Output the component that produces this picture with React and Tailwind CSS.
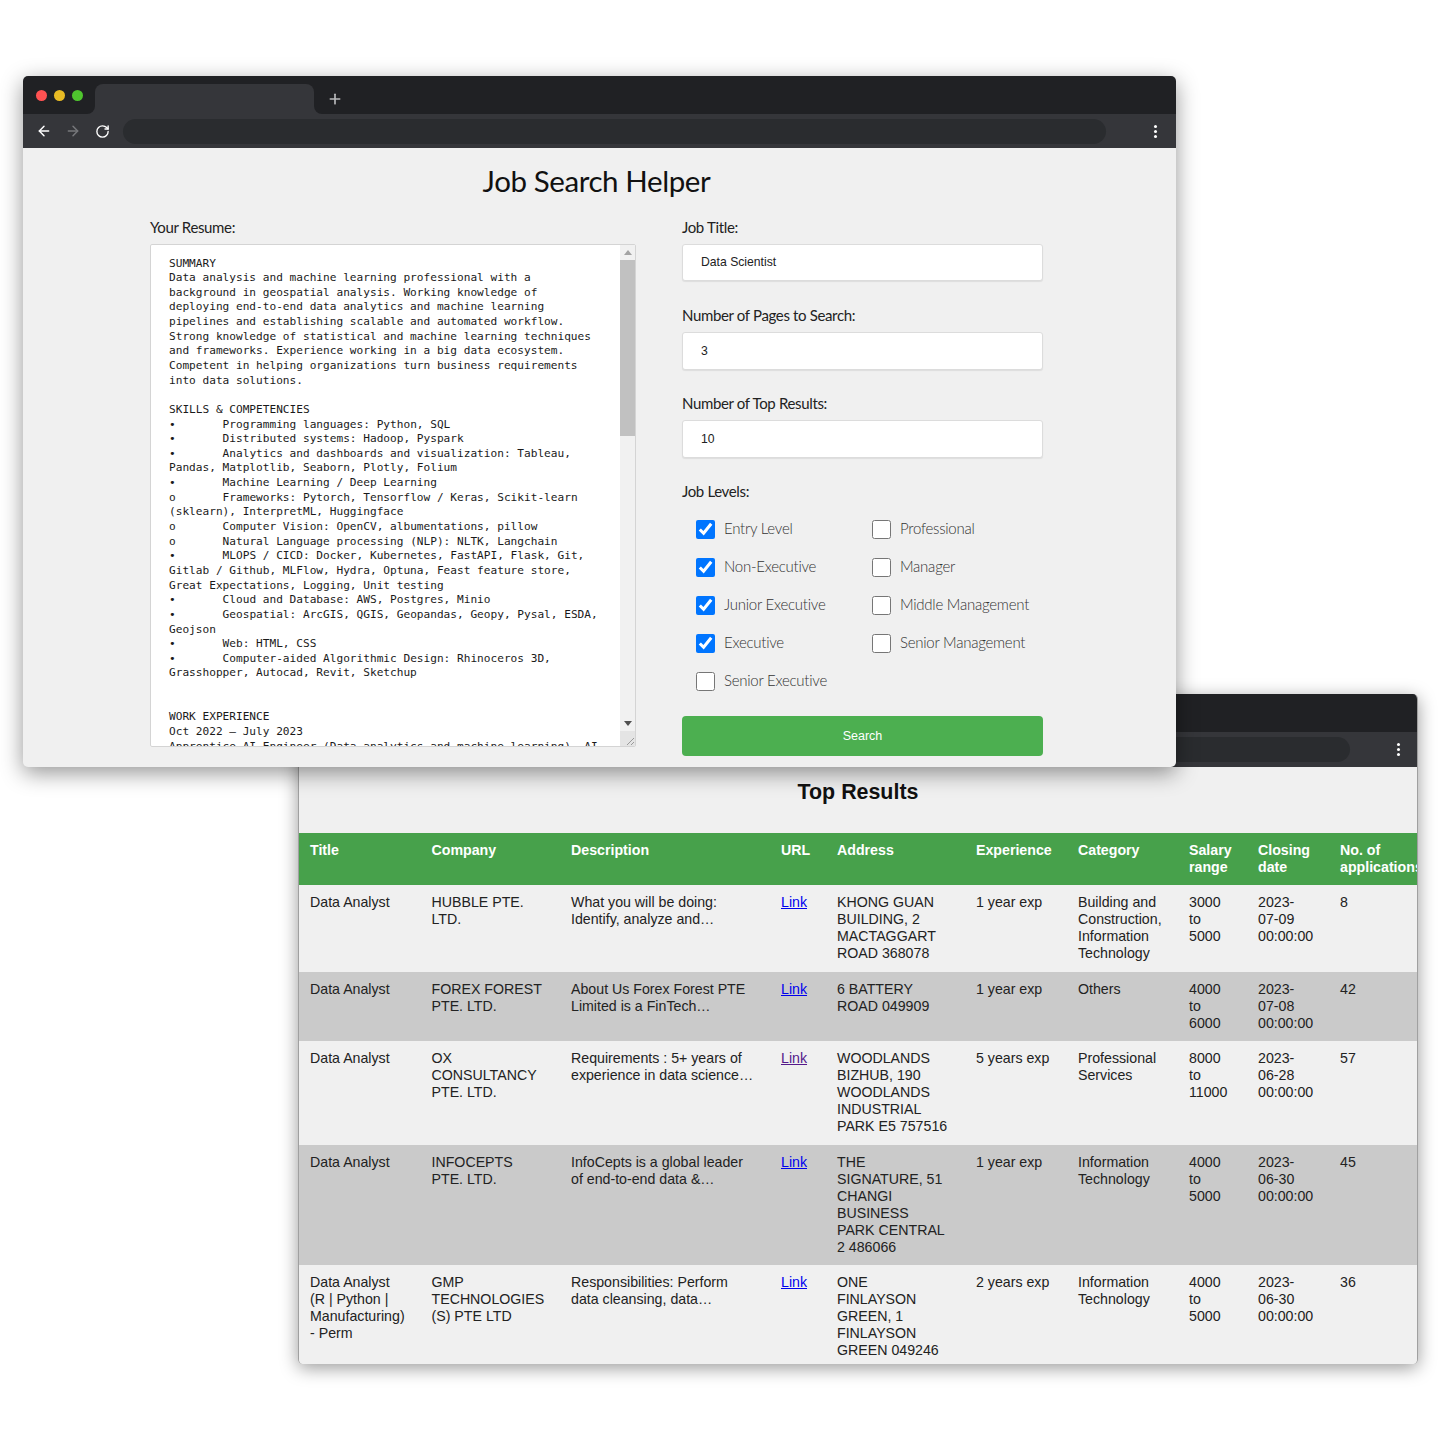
import React from "react";
import { ArrowLeft, ArrowRight, Plus, RotateCw } from "lucide-react";

const RESUME = `SUMMARY
Data analysis and machine learning professional with a
background in geospatial analysis. Working knowledge of
deploying end-to-end data analytics and machine learning
pipelines and establishing scalable and automated workflow.
Strong knowledge of statistical and machine learning techniques
and frameworks. Experience working in a big data ecosystem.
Competent in helping organizations turn business requirements
into data solutions.

SKILLS & COMPETENCIES
•\tProgramming languages: Python, SQL
•\tDistributed systems: Hadoop, Pyspark
•\tAnalytics and dashboards and visualization: Tableau,
Pandas, Matplotlib, Seaborn, Plotly, Folium
•\tMachine Learning / Deep Learning
o\tFrameworks: Pytorch, Tensorflow / Keras, Scikit-learn
(sklearn), InterpretML, Huggingface
o\tComputer Vision: OpenCV, albumentations, pillow
o\tNatural Language processing (NLP): NLTK, Langchain
•\tMLOPS / CICD: Docker, Kubernetes, FastAPI, Flask, Git,
Gitlab / Github, MLFlow, Hydra, Optuna, Feast feature store,
Great Expectations, Logging, Unit testing
•\tCloud and Database: AWS, Postgres, Minio
•\tGeospatial: ArcGIS, QGIS, Geopandas, Geopy, Pysal, ESDA,
Geojson
•\tWeb: HTML, CSS
•\tComputer-aided Algorithmic Design: Rhinoceros 3D,
Grasshopper, Autocad, Revit, Sketchup


WORK EXPERIENCE
Oct 2022 – July 2023
Apprentice AI Engineer (Data analytics and machine learning), AI`;

const LEVELS = [
  ["Entry Level", true],
  ["Professional", false],
  ["Non-Executive", true],
  ["Manager", false],
  ["Junior Executive", true],
  ["Middle Management", false],
  ["Executive", true],
  ["Senior Management", false],
  ["Senior Executive", false],
];

const COLUMNS = [
  ["Title", 121.5],
  ["Company", 139.5],
  ["Description", 210],
  ["URL", 56],
  ["Address", 139],
  ["Experience", 102],
  ["Category", 111],
  ["Salary range", 69],
  ["Closing date", 82],
  ["No. of applications", 100],
];

const ROWS = [
  {
    height: "h-[87px]",
    title: "Data Analyst",
    company: "HUBBLE PTE. LTD.",
    desc: "What you will be doing: Identify, analyze and…",
    address: "KHONG GUAN BUILDING, 2 MACTAGGART ROAD 368078",
    exp: "1 year exp",
    category: "Building and Construction, Information Technology",
    salary: "3000 to 5000",
    closing: "2023-\n07-09\n00:00:00",
    apps: "8",
  },
  {
    height: "h-[69px]",
    title: "Data Analyst",
    company: "FOREX FOREST PTE. LTD.",
    desc: "About Us Forex Forest PTE Limited is a FinTech…",
    address: "6 BATTERY ROAD 049909",
    exp: "1 year exp",
    category: "Others",
    salary: "4000 to 6000",
    closing: "2023-\n07-08\n00:00:00",
    apps: "42",
  },
  {
    height: "h-[104px]",
    title: "Data Analyst",
    company: "OX CONSULTANCY PTE. LTD.",
    desc: "Requirements : 5+ years of experience in data science…",
    address: "WOODLANDS BIZHUB, 190 WOODLANDS INDUSTRIAL PARK E5 757516",
    exp: "5 years exp",
    category: "Professional Services",
    salary: "8000 to 11000",
    closing: "2023-\n06-28\n00:00:00",
    apps: "57",
    visited: true,
  },
  {
    height: "h-[120px]",
    title: "Data Analyst",
    company: "INFOCEPTS PTE. LTD.",
    desc: "InfoCepts is a global leader of end-to-end data &…",
    address: "THE SIGNATURE, 51 CHANGI BUSINESS PARK CENTRAL 2 486066",
    exp: "1 year exp",
    category: "Information Technology",
    salary: "4000 to 5000",
    closing: "2023-\n06-30\n00:00:00",
    apps: "45",
  },
  {
    height: "h-[99px]",
    title: "Data Analyst (R | Python | Manufacturing) - Perm",
    company: "GMP TECHNOLOGIES (S) PTE LTD",
    desc: "Responsibilities: Perform data cleansing, data…",
    address: "ONE FINLAYSON GREEN, 1 FINLAYSON GREEN 049246",
    exp: "2 years exp",
    category: "Information Technology",
    salary: "4000 to 5000",
    closing: "2023-\n06-30\n00:00:00",
    apps: "36",
  },
];

const labelCls = "block text-[15px] leading-[19px] tracking-[-0.35px] text-[#222]";
const cellCls = "px-[11px] py-[9px] align-top";

function BrowserBar({ menuRight, pillRight, toolbarCls }) {
  return (
    <div className="shrink-0">
      {/* Tab strip */}
      <div className="relative flex h-[38px] items-end bg-[#202124] pl-[72px]">
        <div className="absolute left-[13px] top-[14px] flex gap-[7px]">
          <span className="h-[11px] w-[11px] rounded-full bg-[#ff5252]" />
          <span className="h-[11px] w-[11px] rounded-full bg-[#e8bb24]" />
          <span className="h-[11px] w-[11px] rounded-full bg-[#4fc52e]" />
        </div>
        <div className="relative h-[30px] w-[219px] rounded-t-lg bg-[#35363a]">
          <div className="absolute bottom-0 left-[-8px] h-2 w-2 bg-[#35363a]">
            <div className="h-2 w-2 rounded-br-lg bg-[#202124]" />
          </div>
          <div className="absolute bottom-0 right-[-8px] h-2 w-2 bg-[#35363a]">
            <div className="h-2 w-2 rounded-bl-lg bg-[#202124]" />
          </div>
        </div>
        <Plus size={16} strokeWidth={2.5} className="mb-[7px] ml-[13px] text-[#b9babc]" />
      </div>

      {/* Toolbar */}
      <div className={`relative flex items-center bg-[#35363a] pl-[13px] ${toolbarCls}`} style={{ paddingRight: pillRight }}>
        <ArrowLeft size={16} strokeWidth={2.2} className="text-white" />
        <ArrowRight size={16} strokeWidth={2.2} className="ml-[13px] text-[#77787b]" />
        <RotateCw size={15} strokeWidth={2.2} className="ml-[14px] text-white" />
        <div className="ml-[13px] h-[25px] flex-1 rounded-full bg-[#2a2c2f]" />
        <div className="absolute top-[11px] flex flex-col gap-[2px]" style={{ right: menuRight }}>
          <span className="h-[3px] w-[3px] rounded-full bg-white" />
          <span className="h-[3px] w-[3px] rounded-full bg-white" />
          <span className="h-[3px] w-[3px] rounded-full bg-white" />
        </div>
      </div>
    </div>
  );
}

function Field({ label, value, height, top }) {
  return (
    <div style={{ marginTop: top }}>
      <label className={`${labelCls} mb-[7px]`}>{label}</label>
      <div
        className="flex items-center rounded-[3px] border border-[#dcdcdc] bg-white pl-[18px] font-['Liberation_Sans',sans-serif] text-[12.2px] text-[#222] shadow-[0_1px_1px_rgba(0,0,0,0.08)]"
        style={{ height }}
      >
        {value}
      </div>
    </div>
  );
}

function ResumeBox() {
  return (
    <div className="flex h-[503px] w-[486px] overflow-hidden rounded-[2px] border border-[#d4d4d4] bg-white">
      <pre className="flex-1 overflow-hidden pl-[18px] pt-[11.5px] font-['DejaVu_Sans_Mono',monospace] text-[11.13px] leading-[14.64px] text-[#1a1a1a] [tab-size:8]">
        {RESUME}
      </pre>
      <div className="flex w-[15px] shrink-0 flex-col bg-[#f1f1f1]">
        <div className="flex h-[15px] items-center justify-center">
          <span className="h-0 w-0 border-x-[4px] border-b-[5px] border-x-transparent border-b-[#a3a3a3]" />
        </div>
        <div className="h-[176px] bg-[#c1c1c1]" />
        <div className="flex-1" />
        <div className="flex h-[15px] items-center justify-center">
          <span className="h-0 w-0 border-x-[4px] border-t-[5px] border-x-transparent border-t-[#505050]" />
        </div>
        <div className="flex h-[15px] items-end justify-end bg-[#e4e4e4]">
          <svg width="10" height="10" viewBox="0 0 10 10" stroke="#9a9a9a" fill="none">
            <path d="M9 2 2 9M9 6 6 9" />
          </svg>
        </div>
      </div>
    </div>
  );
}

function SearchWindow() {
  return (
    <div className="absolute left-[23px] top-[76px] z-10 flex h-[691px] w-[1153px] flex-col overflow-hidden rounded-[5px] bg-[#f0f0f0] shadow-[0_6px_22px_rgba(0,0,0,0.42)]">
      <BrowserBar menuRight={19} pillRight={70} toolbarCls="h-[34px]" />
      <div className="ml-[127px] w-[893px] font-['Lato',sans-serif]">
        <h1 className="mt-[15px] text-center text-[29.5px] leading-9 tracking-[-0.4px] text-[#111]">Job Search Helper</h1>
        <div className="mt-[19px] flex justify-between">
          <div className="w-[486px]">
            <label className={`${labelCls} mb-[7px]`}>Your Resume:</label>
            <ResumeBox />
          </div>
          <div className="w-[361px]">
            <Field label="Job Title:" value="Data Scientist" height={37} top={0} />
            <Field label="Number of Pages to Search:" value="3" height={38} top={25} />
            <Field label="Number of Top Results:" value="10" height={38} top={24} />
            <label className={`${labelCls} mt-[24px]`}>Job Levels:</label>
            <div className="mt-[9px] grid grid-cols-[176px_1fr] pl-[14px]">
              {LEVELS.map(([name, checked]) => (
                <label key={name} className="flex h-[38px] items-center gap-[9px] text-[15px] font-light tracking-[-0.25px] text-[#333]">
                  <input type="checkbox" defaultChecked={checked} className="m-0 h-[19px] w-[19px]" />
                  <span className="-mt-[2px]">{name}</span>
                </label>
              ))}
            </div>
            <button className="mt-[16px] h-10 w-full rounded bg-[#4caf50] font-['Liberation_Sans',sans-serif] text-[12.5px] text-white">
              Search
            </button>
          </div>
        </div>
      </div>
    </div>
  );
}

function ResultsWindow() {
  return (
    <div className="absolute left-[298px] top-[694px] flex h-[670px] w-[1120px] flex-col overflow-hidden rounded-[5px] border-x border-[#a0a0a0] bg-[#f0f0f0] shadow-[0_4px_18px_rgba(0,0,0,0.4)]">
      <BrowserBar menuRight={17} pillRight={67} toolbarCls="h-[35px]" />
      <div className="font-['Liberation_Sans',sans-serif] text-[14.2px] leading-[17px] text-[#222]">
        <h2 className="pb-[27px] pt-[11px] text-center text-[21.4px] font-bold leading-7 text-[#111]">Top Results</h2>
        <table className="w-[1130px] table-fixed border-collapse">
          <colgroup>
            {COLUMNS.map(([name, width]) => (
              <col key={name} style={{ width }} />
            ))}
          </colgroup>
          <thead>
            <tr className="bg-[#47a14b] text-left text-white">
              {COLUMNS.map(([name]) => (
                <th key={name} className={`${cellCls} font-bold`}>
                  {name}
                </th>
              ))}
            </tr>
          </thead>
          <tbody>
            {ROWS.map((row, i) => (
              <tr key={i} className={`${row.height} ${i % 2 ? "bg-[#cacaca]" : "bg-[#f0f0f0]"}`}>
                <td className={`${cellCls} pr-[13px]`}>{row.title}</td>
                <td className={`${cellCls} pr-[14px]`}>{row.company}</td>
                <td className={`${cellCls} pr-[15px]`}>{row.desc}</td>
                <td className={cellCls}>
                  <a href="#" className={row.visited ? "text-[#551a8b] underline" : "text-[#0000ee] underline"}>
                    Link
                  </a>
                </td>
                <td className={`${cellCls} pr-[17px]`}>{row.address}</td>
                <td className={cellCls}>{row.exp}</td>
                <td className={cellCls}>{row.category}</td>
                <td className={cellCls}>{row.salary}</td>
                <td className={`${cellCls} whitespace-pre-line`}>{row.closing}</td>
                <td className={cellCls}>{row.apps}</td>
              </tr>
            ))}
          </tbody>
        </table>
      </div>
    </div>
  );
}

export default function App() {
  return (
    <div className="relative h-[1440px] w-[1440px] overflow-hidden bg-white">
      <ResultsWindow />
      <SearchWindow />
    </div>
  );
}
